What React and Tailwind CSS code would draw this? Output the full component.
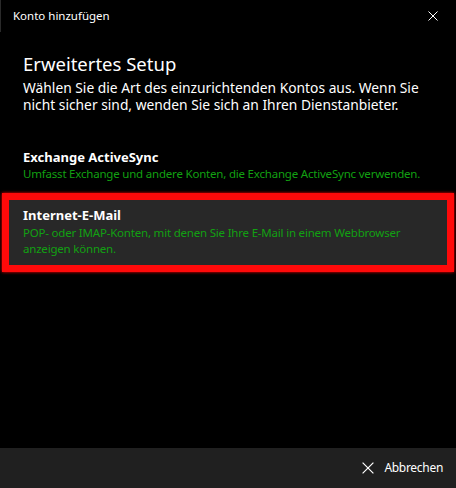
import React from "react";

function XIcon({ size = 10, className = "" }) {
  return (
    <svg width={size} height={size} viewBox="0 0 10 10" className={className}>
      <path d="M0.5 0.5 L9.5 9.5 M9.5 0.5 L0.5 9.5" stroke="currentColor" strokeWidth="1" fill="none" />
    </svg>
  );
}

export default function App() {
  return (
    <div className="w-[456px] h-[488px] bg-black text-white flex flex-col font-['Noto_Sans','Open_Sans',sans-serif]">
      <div className="h-[32px] flex items-center justify-between pl-[12px] pr-[18px] shrink-0 border-l border-[#2a2a2a]">
        <span className="text-[11.5px] text-white">Konto hinzufügen</span>
        <XIcon size={10} className="text-white" />
      </div>
      <div className="flex-1 flex flex-col">
        <div className="pl-[23px] pt-[19px]">
          <div className="text-[18.5px] leading-[26px]">Erweitertes Setup</div>
          <div className="text-[13.8px] leading-[17px] mt-[2px] text-white">
            <div>Wählen Sie die Art des einzurichtenden Kontos aus. Wenn Sie</div>
            <div>nicht sicher sind, wenden Sie sich an Ihren Dienstanbieter.</div>
          </div>
        </div>
        <div className="pl-[23px] pt-[35px] pb-[11px]">
          <div className="text-[13px] font-bold leading-[18px]">Exchange ActiveSync</div>
          <div className="text-[11.5px] tracking-[-0.2px] leading-[16px] text-[#12a012]">
            Umfasst Exchange und andere Konten, die Exchange ActiveSync verwenden.
          </div>
        </div>
        <div className="mx-[2px] border-[7px] border-[#ff0a0a] shadow-[0_0_3px_#ff0000] bg-[#282828] pl-[14px] pr-[8px] pt-[6px] pb-[8px]">
          <div className="text-[13px] font-bold leading-[19px]">Internet-E-Mail</div>
          <div className="text-[11.5px] tracking-[-0.2px] leading-[16px] text-[#12a012]">
            <div>POP- oder IMAP-Konten, mit denen Sie Ihre E-Mail in einem Webbrowser</div>
            <div>anzeigen können.</div>
          </div>
        </div>
      </div>
      <div className="h-[40px] bg-[#202020] flex items-center justify-end pr-[13px] gap-[10px] shrink-0">
        <XIcon size={12} className="text-white" />
        <span className="text-[12px] tracking-[-0.3px]">Abbrechen</span>
      </div>
    </div>
  );
}
